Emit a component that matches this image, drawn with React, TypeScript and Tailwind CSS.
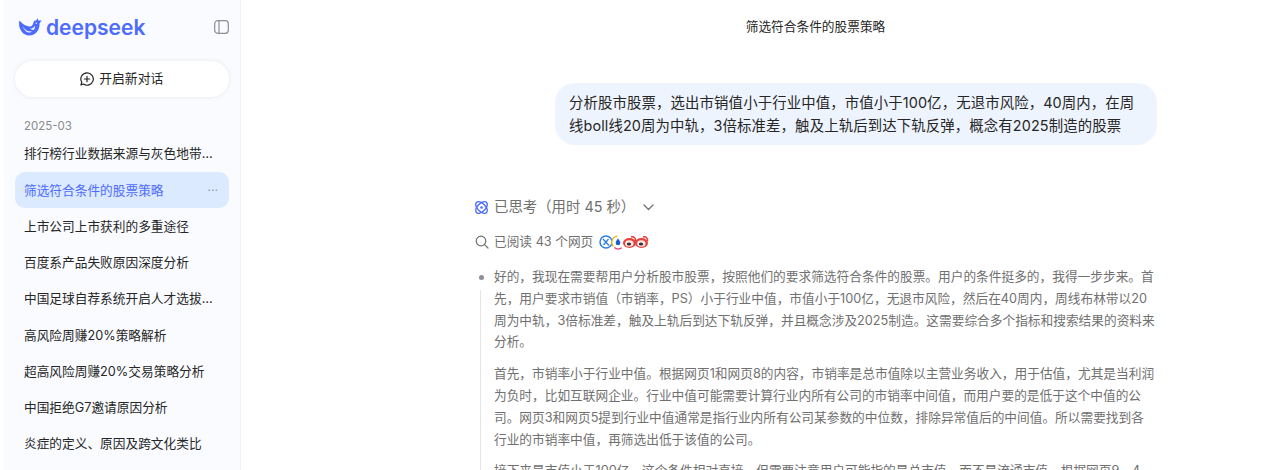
const chats = [
  "排行榜行业数据来源与灰色地带分析",
  "筛选符合条件的股票策略",
  "上市公司上市获利的多重途径",
  "百度系产品失败原因深度分析",
  "中国足球自荐系统开启人才选拔新路径",
  "高风险周赚20%策略解析",
  "超高风险周赚20%交易策略分析",
  "中国拒绝G7邀请原因分析",
  "炎症的定义、原因及跨文化类比",
];

const Logo = () => (
  <svg width="24" height="18" viewBox="0 0 24 18" fill="none">
    <path
      d="M1.500 2.500C4 6 8 8 11 8.500c2.500.4 4-1.500 4.500-4 .3-1.500 1.500-2.200 2.500-1.800L19.500.3l1 2.300 3 0-2 2.900c.5 4.500-2.500 12-10.500 12C4.500 17.500-.5 9.500 1.500 2.500Z"
      fill="#4d6bfe"
    />
    <path d="M4.500 8.500c2.500 3.500 5.500 5.500 9.500 5-1.800 2-6.500 1.500-9.500-5Z" fill="#f9fbff" />
    <path d="M12 10.500c2 .2 4-.8 5-2.800.3 1.500-.2 3.200-1.500 4.200-1.300-.1-2.600-.6-3.500-1.400Z" fill="#f9fbff" />
    <circle cx="18.300" cy="5.300" r=".7" fill="#f9fbff" />
  </svg>
);

const SideToggle = () => (
  <svg width="15" height="14" viewBox="0 0 15 14" fill="none" stroke="#8b8f96" strokeWidth="1.200">
    <rect x="0.700" y="0.700" width="13.600" height="12.600" rx="3" />
    <path d="M5 1v12" />
  </svg>
);

const PlusChat = () => (
  <svg width="14" height="14" viewBox="0 0 14 14" fill="none" stroke="#262626" strokeWidth="1.200" strokeLinecap="round">
    <path d="M7 .8a6.200 6.200 0 1 1-3.600 11.200L.9 13l.9-2.700A6.200 6.200 0 0 1 7 .8Z" strokeLinejoin="round" />
    <path d="M7 4.300v5.400M4.300 7h5.400" />
  </svg>
);

const ThinkIcon = () => (
  <svg width="15" height="15" viewBox="0 0 15 15" fill="none" stroke="#4d6bfe" strokeWidth="1.400">
    <ellipse cx="7.500" cy="7.500" rx="7.200" ry="4" transform="rotate(45 7.500 7.500)" />
    <ellipse cx="7.500" cy="7.500" rx="7.200" ry="4" transform="rotate(-45 7.500 7.500)" />
    <circle cx="7.500" cy="7.500" r="1.300" fill="#4d6bfe" stroke="none" />
  </svg>
);

const Chevron = () => (
  <svg width="11" height="7" viewBox="0 0 11 7" fill="none" stroke="#707070" strokeWidth="1.300" strokeLinecap="round" strokeLinejoin="round" className="ml-[3px]">
    <path d="M1 1l4.500 4.500L10 1" />
  </svg>
);

const Search = () => (
  <svg width="14" height="14" viewBox="0 0 14 14" fill="none" stroke="#707070" strokeWidth="1.200" strokeLinecap="round">
    <circle cx="6" cy="6" r="4.800" />
    <path d="M9.600 9.600L13 13" />
  </svg>
);

const Weibo = ({ className }: { className: string }) => (
  <svg width="14" height="12" viewBox="0 0 14 12" className={className}>
    <ellipse cx="6.500" cy="7" rx="6.500" ry="5" fill="#e6413d" />
    <path d="M8 1c2.500-1 5 1 4.500 4" fill="none" stroke="#e6413d" strokeWidth="1.500" />
    <ellipse cx="6.300" cy="7.500" rx="4.200" ry="3.200" fill="#fbe9e7" />
    <ellipse cx="6" cy="8" rx="2.200" ry="1.600" fill="#3a3030" />
  </svg>
);

const Sources = () => (
  <div className="ml-[1px] flex items-center">
    <svg width="14" height="14" viewBox="0 0 14 14" fill="none">
      <circle cx="7" cy="7" r="6" stroke="#2f7fe0" strokeWidth="1.500" fill="#fff" />
      <path d="M4 4l6 6.500M9.500 4L4.500 10" stroke="#2f7fe0" strokeWidth="1.300" />
    </svg>
    <svg width="14" height="15" viewBox="0 0 14 15" fill="none" className="-ml-[2px]">
      <circle cx="7" cy="7.500" r="6.500" fill="#fff" />
      <path d="M6.500 1.200A6.300 6.300 0 0 0 2.300 11.500" stroke="#eab308" strokeWidth="1.200" />
      <path d="M3.300 12.500a6.300 6.300 0 0 0 7.500.3" stroke="#e23d6f" strokeWidth="1.200" />
      <path d="M7 3.500c1.700 2 2.300 3.300 2.300 4.500a2.300 2.300 0 0 1-4.600 0c0-1.200.6-2.500 2.300-4.500Z" fill="#1d5fd0" />
    </svg>
    <Weibo className="-ml-[2px]" />
    <Weibo className="-ml-[2px]" />
  </div>
);

const App = () => {
  return (
    <div
      className="flex h-[470px] w-[1278px] overflow-hidden bg-white text-[#262626]"
      style={{ fontFamily: "Inter, 'Noto Sans CJK SC', sans-serif" }}
    >
      <aside className="ml-[4px] flex w-[237px] shrink-0 flex-col border-r border-[#f0f2f6] bg-[#f9fbff] pl-[11px] pr-[11.500px]">
        <div className="flex h-[54px] items-center justify-between pl-[3px]">
          <div className="flex items-center gap-[4px]">
            <Logo />
            <span className="text-[21px] font-semibold leading-none text-[#4d6bfe]">deepseek</span>
          </div>
          <SideToggle />
        </div>
        <button className="mt-[7px] flex h-[36px] items-center justify-center gap-[5px] rounded-[18px] bg-white text-[12.800px] text-[#262626] shadow-[0_0_5px_rgba(0,0,0,0.08)]">
          <PlusChat />
          开启新对话
        </button>
        <div className="mt-[21px] pl-[9px] text-[11.500px] leading-[16px] text-[#8b8b8b]">2025-03</div>
        <ul className="mt-[2px] flex flex-col gap-[0.25px]">
          {chats.map((chat, i) => (
            <li
              key={chat}
              className={`relative flex h-[36px] items-center rounded-[10px] pl-[9px] pr-[15.500px] text-[12.700px] ${
                i === 1 ? "bg-[#dbeafe] text-[#4d6bfe]" : ""
              }`}
            >
              <span className="min-w-0 flex-1 truncate">{chat}</span>
              {i === 1 && (
                <span className="absolute right-[10px] text-[11px] tracking-[0.5px] text-[#8b8f96]">···</span>
              )}
            </li>
          ))}
        </ul>
      </aside>
      <main className="min-w-0 flex-1 pl-[233px]">
        <div className="flex w-[683px] flex-col">
          <h1 className="pt-[18px] text-center text-[12.700px] font-normal leading-[18px]">筛选符合条件的股票策略</h1>
          <div className="mt-[47px] w-[602px] self-end rounded-[20px] bg-[#eef4fe] px-[14px] py-[8px] text-[14.400px] leading-[23px] tracking-[0.12px]">
            分析股市股票，选出市销值小于行业中值，市值小于100亿，无退市风险，40周内，在周线boll线20周为中轨，3倍标准差，触及上轨后到达下轨反弹，概念有2025制造的股票
          </div>
          <div className="mt-[52px] flex items-center gap-[5px] text-[14.400px] leading-[20px] text-[#707070]">
            <ThinkIcon />
            <span>已思考（用时 45 秒）</span>
            <Chevron />
          </div>
          <div className="mt-[15px] flex items-center gap-[5px] pl-[1px] text-[12.700px] leading-[20px] text-[#707070]">
            <Search />
            <span>已阅读 43 个网页</span>
            <Sources />
          </div>
          <div className="relative mt-[14px] pl-[20px] pr-[2px] text-[12.700px] leading-[21.800px] text-[#707070]">
            <span className="absolute left-[5px] top-[9px] h-[5px] w-[5px] rounded-full bg-[#8b8f96]" />
            <div className="absolute bottom-0 left-[6px] top-[24px] w-px bg-[#e5e5e5]" />
            <p>
              好的，我现在需要帮用户分析股市股票，按照他们的要求筛选符合条件的股票。用户的条件挺多的，我得一步步来。首先，用户要求市销值（市销率，PS）小于行业中值，市值小于100亿，无退市风险，然后在40周内，周线布林带以20周为中轨，3倍标准差，触及上轨后到达下轨反弹，并且概念涉及2025制造。这需要综合多个指标和搜索结果的资料来分析。
            </p>
            <p className="mt-[10px]">
              首先，市销率小于行业中值。根据网页1和网页8的内容，市销率是总市值除以主营业务收入，用于估值，尤其是当利润为负时，比如互联网企业。行业中值可能需要计算行业内所有公司的市销率中间值，而用户要的是低于这个中值的公司。网页3和网页5提到行业中值通常是指行业内所有公司某参数的中位数，排除异常值后的中间值。所以需要找到各行业的市销率中值，再筛选出低于该值的公司。
            </p>
            <p className="mt-[10px]">
              接下来是市值小于100亿，这个条件相对直接，但需要注意用户可能指的是总市值，而不是流通市值。根据网页9、4
            </p>
          </div>
        </div>
      </main>
    </div>
  );
};

export default App;
